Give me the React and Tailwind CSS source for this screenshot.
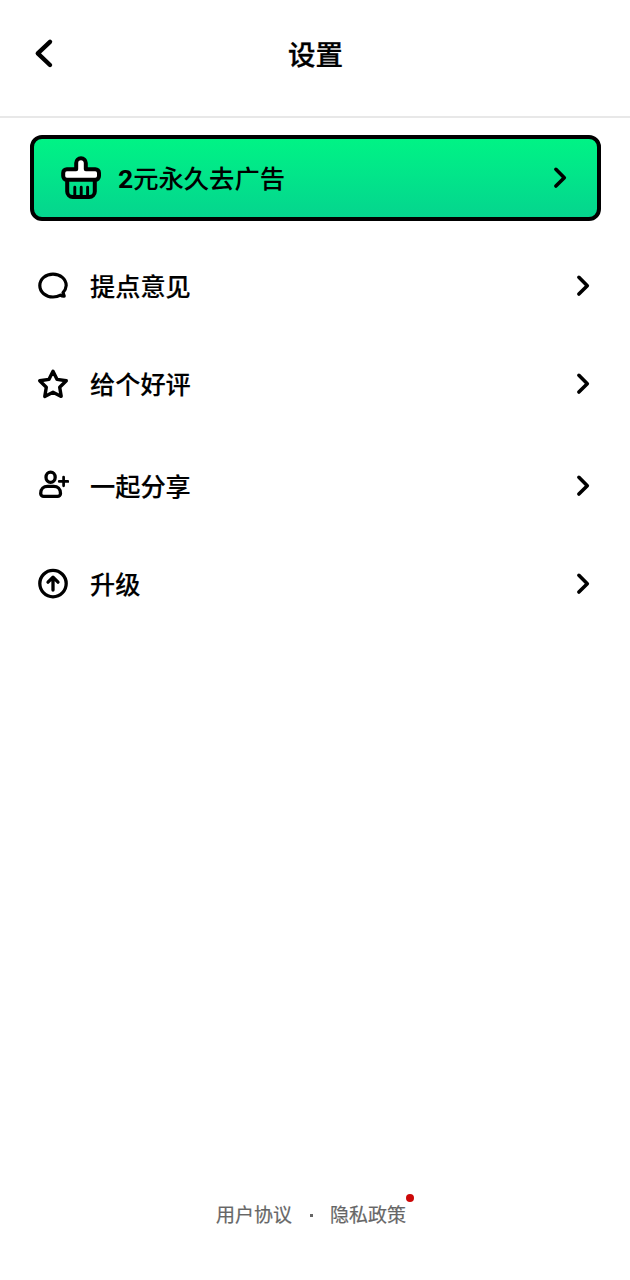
import React from 'react';

const MENU_ITEMS = [
  { id: 'feedback', label: '提点意见', Icon: FeedbackIcon, className: 'h-[98px]' },
  { id: 'rate', label: '给个好评', Icon: StarIcon, className: 'h-[98px]' },
  { id: 'share', label: '一起分享', Icon: ShareIcon, className: 'mt-[3px] h-[99px]' },
  { id: 'upgrade', label: '升级', Icon: UpgradeIcon, className: 'h-[98px]' },
];

function BackIcon() {
  return (
    <svg width="40" height="40" viewBox="0 0 40 40" fill="none" stroke="black" strokeWidth="4.4" strokeLinecap="round" strokeLinejoin="round">
      <path d="M26 7.8 13.8 19.4 26 31" />
    </svg>
  );
}

function ChevronIcon() {
  return (
    <svg width="18" height="24" viewBox="0 0 18 24" fill="none" stroke="black" strokeWidth="3.6" strokeLinecap="round" strokeLinejoin="round">
      <path d="m4.9 3.3 8.4 8.4-8.4 8.4" />
    </svg>
  );
}

function BrushIcon() {
  return (
    <svg width="40" height="44" viewBox="0 0 40 44" fill="none" stroke="black" strokeWidth="4" strokeLinecap="round" strokeLinejoin="round">
      <path d="M6.2 24v11.5a5.5 5.5 0 0 0 5.5 5.5h16.6a5.5 5.5 0 0 0 5.5-5.5V24" />
      <path d="M13.8 31.2V40M20.2 31.2V40M26.6 31.2V40" strokeWidth="2.9" />
      <path d="M15.2 13.2V7a4.8 4.8 0 0 1 9.6 0v6.2h9.5a3.7 3.7 0 0 1 3.7 3.7v3.2a3.7 3.7 0 0 1-3.7 3.7H5.9a3.7 3.7 0 0 1-3.7-3.7v-3.2a3.7 3.7 0 0 1 3.7-3.7Z" fill="white" />
    </svg>
  );
}

function FeedbackIcon() {
  return (
    <svg width="32" height="32" viewBox="0 0 32 32" fill="none" stroke="black" strokeWidth="3.2" strokeLinecap="round" strokeLinejoin="round">
      <path d="M26 22.6A11.2 11.2 0 0 0 29.2 15.5C29.2 9 23.3 4.1 16 4.1S2.8 9 2.8 15.5 8.7 27 16 27c2.8 0 5.4-.7 7.5-1.9 1.1.8 2.2 1.1 3.7 1Z" />
    </svg>
  );
}

function StarIcon() {
  return (
    <svg width="32" height="32" viewBox="0 0 32 32" fill="none" stroke="black" strokeWidth="3.4" strokeLinecap="round" strokeLinejoin="round">
      <path d="m16 3.2 4.1 8.2 9.2 1.4-6.6 6.5 1.5 9.1-8.2-4.1-8.2 4.1 1.5-9.1-6.6-6.5 9.2-1.4Z" />
    </svg>
  );
}

function ShareIcon() {
  return (
    <svg width="32" height="32" viewBox="0 0 32 32" fill="none" stroke="black" strokeWidth="3.3" strokeLinecap="round" strokeLinejoin="round">
      <ellipse cx="13.6" cy="7.2" rx="4.6" ry="5.1" />
      <path d="M3.7 23.4c0-4.4 3-7 6.7-7h6.4c3.7 0 6.7 2.6 6.7 7a3 3 0 0 1-3 3H6.7a3 3 0 0 1-3-3Z" />
      <path d="M22.2 11.4h8.8M26.6 7v8.8" strokeWidth="2.7" />
    </svg>
  );
}

function UpgradeIcon() {
  return (
    <svg width="32" height="32" viewBox="0 0 32 32" fill="none" stroke="black" strokeWidth="3.3" strokeLinecap="round" strokeLinejoin="round">
      <circle cx="16" cy="15.6" r="13.2" />
      <path d="M16 22V9.8M11 14.2l5-5 5 5" />
    </svg>
  );
}

export default function App() {
  return (
    <div className="flex h-[1280px] w-[630px] flex-col bg-white font-['Roboto','Noto_Sans_CJK_SC',sans-serif] font-medium text-black">
      <header className="grid h-[118px] grid-cols-[80px_1fr_80px] border-b-2 border-[#e8e8e8] pb-2">
        <button className="flex items-center justify-end pr-[16px]" aria-label="返回">
          <BackIcon />
        </button>
        <h1 className="flex items-center justify-center pt-1 pl-px text-[27.5px] font-medium [-webkit-text-stroke:0.3px_black]">设置</h1>
      </header>

      <main className="flex-1 px-[30px] pt-[17px]">
        <button className="flex h-[85.5px] w-[570.5px] items-center rounded-[12px] border-4 border-black bg-linear-to-b from-[#00f385] to-[#05d58e] pr-[28px] pl-[27px]">
          <BrushIcon />
          <span className="ml-[17px] pt-[3px] text-[25.3px] leading-none">
            <b className="text-[26.5px]">2</b>元永久去广告
          </span>
          <span className="ml-auto">
            <ChevronIcon />
          </span>
        </button>

        <nav className="mt-[16.5px]">
          {MENU_ITEMS.map(({ id, label, Icon, className }) => (
            <a key={id} className={`flex items-center pr-[8px] pl-[7px] ${className}`}>
              <Icon />
              <span className="ml-[21px] pt-1 text-[25.2px] leading-none [-webkit-text-stroke:0.15px_black]">{label}</span>
              <span className="ml-auto">
                <ChevronIcon />
              </span>
            </a>
          ))}
        </nav>
      </main>

      <footer className="flex items-center justify-center pr-[8px] pb-[50px] text-[19px] leading-7 font-normal text-[#666]">
        <span className="pt-0.5 [-webkit-text-stroke:0.2px_#666]">用户协议</span>
        <span className="flex w-[38px] justify-center">
          <i className="h-[3px] w-[3px] bg-[#666]" />
        </span>
        <span className="relative pt-0.5 [-webkit-text-stroke:0.2px_#666]">
          隐私政策
          <i className="absolute -top-[6px] -right-2 h-2 w-2 rounded-full bg-[#cc0808]" />
        </span>
      </footer>
    </div>
  );
}
